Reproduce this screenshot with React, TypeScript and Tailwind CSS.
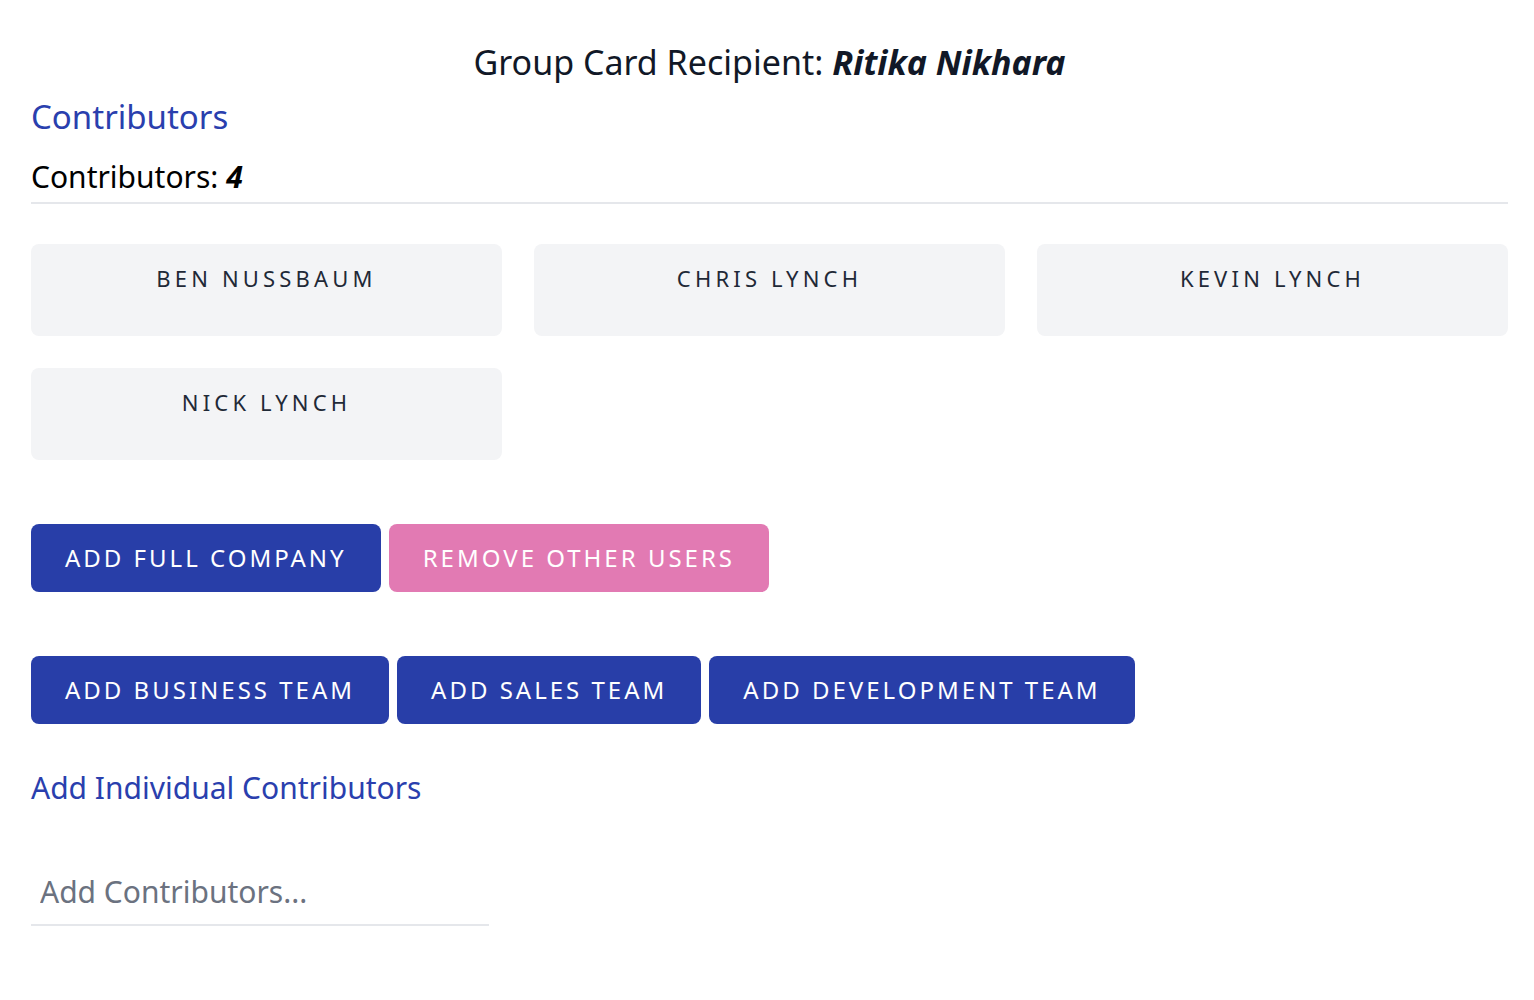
const CONTRIBUTORS = ['Ben Nussbaum', 'Chris Lynch', 'Kevin Lynch', 'Nick Lynch']

const TEAM_BUTTONS = ['Add Business Team', 'Add Sales Team', 'Add Development Team']

function ActionButton({ label, tone = 'blue' }: { label: string; tone?: 'blue' | 'pink' }) {
  return (
    <button
      type="button"
      className={`h-[68px] px-[34px] rounded-lg uppercase text-white text-[24px] leading-[32px] tracking-[0.125em]
                  ${tone === 'blue' ? 'bg-[#283ea8]' : 'bg-[#e27ab3]'}`}
    >
      {label}
    </button>
  )
}

export default function App() {
  return (
    <div className="min-h-screen bg-white pl-[31px] pr-[26px] pt-[38px] font-['Noto_Sans',sans-serif] text-[#111827]">
      <h1 className="text-center text-[34px] leading-[48px]">
        Group Card Recipient: <span className="font-bold italic">Ritika Nikhara</span>
      </h1>

      <h2 className="mt-[11px] text-[33px] leading-[40px] text-[#2a3fae]">Contributors</h2>

      <div className="mt-[22px] pb-[7px] border-b-2 border-[#e5e7eb] text-[30px] leading-[36px] text-black">
        Contributors: <span className="font-bold italic">{CONTRIBUTORS.length}</span>
      </div>

      <div className="mt-[40px] grid grid-cols-3 gap-[32px]">
        {CONTRIBUTORS.map(name => (
          <div
            key={name}
            className="h-[92px] rounded-lg bg-[#f3f4f6] pt-[20px] text-center uppercase text-[22px] leading-[28px] tracking-[0.19em] text-[#1f2937]"
          >
            {name}
          </div>
        ))}
      </div>

      <div className="mt-[64px] flex gap-[8px]">
        <ActionButton label="Add Full Company" />
        <ActionButton label="Remove Other Users" tone="pink" />
      </div>

      <div className="mt-[64px] flex gap-[8px]">
        {TEAM_BUTTONS.map(label => (
          <ActionButton key={label} label={label} />
        ))}
      </div>

      <h3 className="mt-[44px] text-[30px] leading-[40px] text-[#2a3fae]">Add Individual Contributors</h3>

      <div className="mt-[64px] w-[458px] border-b-2 border-[#e5e7eb]">
        <input
          type="text"
          placeholder="Add Contributors..."
          className="w-full px-[9px] pb-[12px] text-[30px] leading-[40px] outline-none placeholder:text-[#6b7280]"
        />
      </div>
    </div>
  )
}
